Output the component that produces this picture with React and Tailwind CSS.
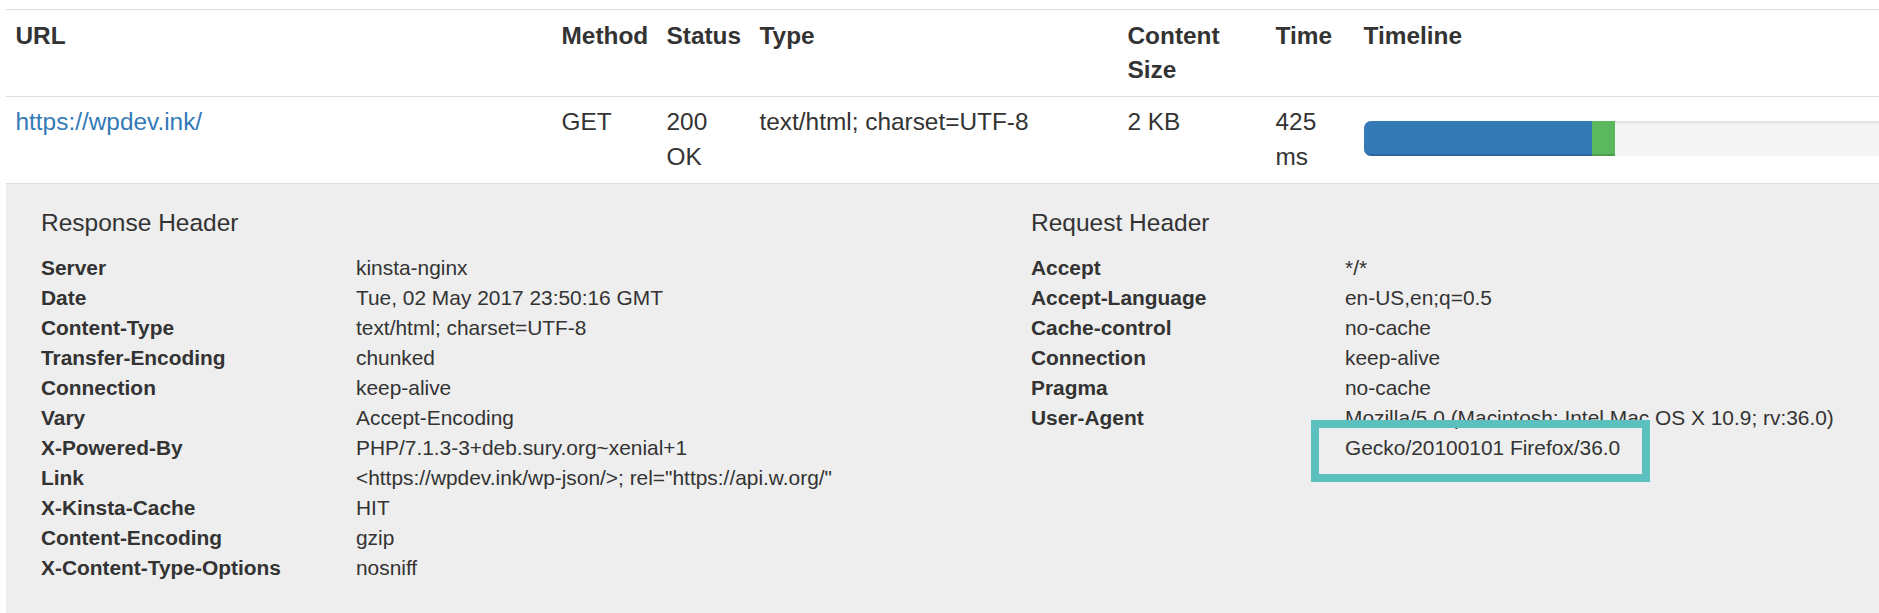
export default function App() {
  const resp = [
    ["Server", "kinsta-nginx"],
    ["Date", "Tue, 02 May 2017 23:50:16 GMT"],
    ["Content-Type", "text/html; charset=UTF-8"],
    ["Transfer-Encoding", "chunked"],
    ["Connection", "keep-alive"],
    ["Vary", "Accept-Encoding"],
    ["X-Powered-By", "PHP/7.1.3-3+deb.sury.org~xenial+1"],
    ["Link", '<https://wpdev.ink/wp-json/>; rel="https://api.w.org/"'],
    ["X-Kinsta-Cache", "HIT"],
    ["Content-Encoding", "gzip"],
    ["X-Content-Type-Options", "nosniff"],
  ];
  const req = [
    ["Accept", "*/*"],
    ["Accept-Language", "en-US,en;q=0.5"],
    ["Cache-control", "no-cache"],
    ["Connection", "keep-alive"],
    ["Pragma", "no-cache"],
  ];
  const th = "px-[9.5px] py-[8.6px] text-left align-top font-bold border-t border-b border-[#ddd]";
  const td = "px-[9.5px] py-[8.6px] text-left align-top font-normal border-b border-[#ddd]";
  return (
    <div className="relative w-[1879px] h-[613px] overflow-hidden bg-white pt-[9px] pl-[6px] text-[#333] font-['Liberation_Sans',Arial,Helvetica,sans-serif]">
      <table className="table-fixed w-[2088px] border-collapse text-[24.4px] leading-[34.3px]">
        <thead>
          <tr>
            <th className={`${th} w-[546px]`}>URL</th>
            <th className={`${th} w-[105px]`}>Method</th>
            <th className={`${th} w-[93px]`}>Status</th>
            <th className={`${th} w-[368px]`}>Type</th>
            <th className={`${th} w-[148px]`}>Content Size</th>
            <th className={`${th} w-[88px]`}>Time</th>
            <th className={`${th} w-[740px]`}>Timeline</th>
          </tr>
        </thead>
        <tbody>
          <tr>
            <td className={td}>
              <a className="text-[#337ab7]">https://wpdev.ink/</a>
            </td>
            <td className={td}>GET</td>
            <td className={td}>200 OK</td>
            <td className={td}>text/html; charset=UTF-8</td>
            <td className={td}>2 KB</td>
            <td className={td}>425 ms</td>
            <td className={td}>
              <div className="mt-[15.7px] flex h-[34.7px] w-[721px] overflow-hidden rounded-[7px] bg-[#f5f5f5] shadow-[inset_0_2px_3px_rgba(0,0,0,0.1)]">
                <div className="w-[228.5px] bg-[#337ab7] shadow-[inset_0_-2px_0_rgba(0,0,0,0.15)]" />
                <div className="w-[23.3px] bg-[#5cb85c] shadow-[inset_0_-2px_0_rgba(0,0,0,0.15)]" />
              </div>
            </td>
          </tr>
        </tbody>
      </table>

      <div className="flex h-[450px] bg-[#eeeeee] pl-[35px] pt-[25.6px]">
        <div className="w-[990px] shrink-0">
          <h4 className="text-[24.5px] leading-[27px] font-normal">Response Header</h4>
          <dl className="mt-[17.2px] grid grid-cols-[315px_1fr] text-[20.9px] leading-[30px]">
            {resp.map(([k, v]) => (
              <div key={k} className="contents">
                <dt className="font-bold">{k}</dt>
                <dd className="whitespace-nowrap">{v}</dd>
              </div>
            ))}
          </dl>
        </div>
        <div className="w-[860px] shrink-0">
          <h4 className="text-[24.5px] leading-[27px] font-normal">Request Header</h4>
          <dl className="mt-[17.2px] grid grid-cols-[314px_1fr] text-[20.9px] leading-[30px]">
            {req.map(([k, v]) => (
              <div key={k} className="contents">
                <dt className="font-bold">{k}</dt>
                <dd className="whitespace-nowrap">{v}</dd>
              </div>
            ))}
            <dt className="font-bold">User-Agent</dt>
            <dd className="whitespace-nowrap">
              <span className="block">Mozilla/5.0 (Macintosh; Intel Mac OS X 10.9; rv:36.0)</span>
              <span className="block">Gecko/20100101 Firefox/36.0</span>
            </dd>
          </dl>
        </div>
      </div>

      <div className="absolute left-[1311px] top-[420px] h-[62px] w-[339px] border-[8px] border-[#5bc0be]" />
    </div>
  );
}
